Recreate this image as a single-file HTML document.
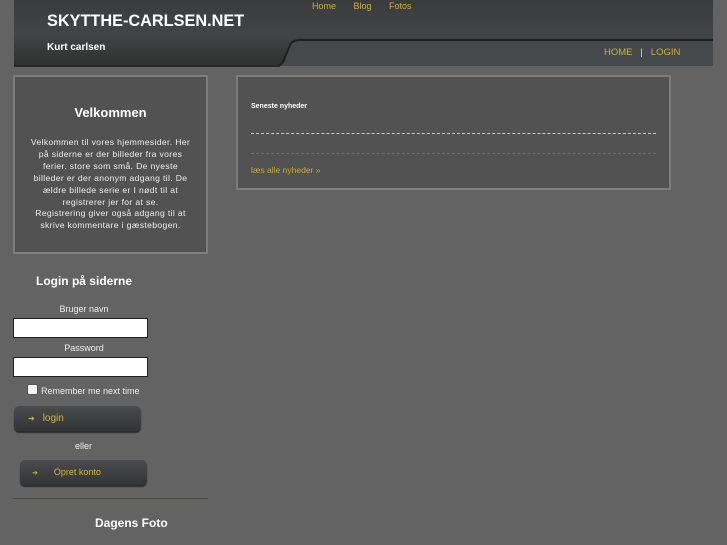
<!DOCTYPE html>
<html><head><meta charset="utf-8"><style>
body{margin:0;width:727px;height:545px;background:#636363;font-family:"Liberation Sans",sans-serif;position:relative;overflow:hidden}
.a{position:absolute}
.box{position:absolute;background:#525252;border:2px solid #7d7d7d;box-sizing:border-box}
.t{color:#fff;font-weight:bold}
.btn{position:absolute;background:linear-gradient(#4a4b4c,#333435);border-radius:5px;box-shadow:0 2px 1px #2c2c2c;color:#d8b43c}
input{position:absolute;margin:0;box-sizing:border-box;border:1px solid #222;background:#fff}
</style></head><body>
<svg class="a" style="left:0;top:0" width="727" height="70">
<defs><linearGradient id="g" x1="0" y1="0" x2="0" y2="1"><stop offset="0" stop-color="#3a3b3c"/><stop offset=".5" stop-color="#434445"/><stop offset="1" stop-color="#2f3030"/></linearGradient></defs>
<path d="M14 0H713V66H14Z" fill="url(#g)"/>
<path d="M300 40H713V66H280C283 63 285 58 288 50 290 44 292 40 300 40Z" fill="#46494b"/>
<path d="M713 40H300C292 40 290 44 288 50L284 60C282 64 280 66 275 66" stroke="#1e1f20" stroke-width="2" fill="none"/>
<rect x="14" y="65" width="266" height="2" fill="#282828"/>
</svg>
<div class="a" style="left:312px;top:1px;font-size:9px;color:#d1ad3a">Home&nbsp;&nbsp;&nbsp;&nbsp;&nbsp;&nbsp;&nbsp;Blog&nbsp;&nbsp;&nbsp;&nbsp;&nbsp;&nbsp;&nbsp;Fotos</div>
<div class="a t" style="left:47px;top:12px;font-size:16.3px">SKYTTHE-CARLSEN.NET</div>
<div class="a t" style="left:47px;top:42px;font-size:10px">Kurt carlsen</div>
<div class="a" style="left:604px;top:47px;font-size:9.5px;color:#d1ad3a">HOME&nbsp;&nbsp;&nbsp;<span style="color:#ddd">|</span>&nbsp;&nbsp;&nbsp;LOGIN</div>

<div class="box" style="left:13px;top:75px;width:195px;height:179px;text-align:center;color:#eee">
<div class="t" style="margin-top:28px;font-size:13px">Velkommen</div>
<div style="margin:17px 0 0;font-size:8.6px;letter-spacing:0.35px;line-height:11.9px;white-space:nowrap">Velkommen til vores hjemmesider. Her<br>på siderne er der billeder fra vores<br>ferier. store som små. De nyeste<br>billeder er der anonym adgang til. De<br>ældre billede serie er I nødt til at<br>registrerer jer for at se.<br>Registrering giver også adgang til at<br>skrive kommentare i gæstebogen.</div>
</div>

<div class="a t" style="left:0;width:168px;top:274px;text-align:center;font-size:12px">Login på siderne</div>
<div class="a" style="left:0;width:168px;top:304px;text-align:center;font-size:9px;color:#eee">Bruger navn</div>
<input style="left:13px;top:318px;width:135px;height:20px">
<div class="a" style="left:0;width:168px;top:343px;text-align:center;font-size:9px;color:#eee">Password</div>
<input style="left:13px;top:357px;width:135px;height:20px">
<div class="a" style="left:27px;top:384px;width:11px;height:11px;background:#f4f4f4;border:1px solid #555;box-sizing:border-box;border-radius:2px"></div>
<div class="a" style="left:41px;top:386px;font-size:9px;color:#eee">Remember me next time</div>
<div class="btn" style="left:14px;top:406px;width:127px;height:25px;font-size:10px;line-height:25px"><span style="margin-left:14px;font-size:8px">➔</span><span style="margin-left:8px">login</span></div>
<div class="a" style="left:75px;top:441px;font-size:9px;color:#eee">eller</div>
<div class="btn" style="left:20px;top:460px;width:127px;height:25px;font-size:9px;line-height:24px"><span style="margin-left:12px;font-size:7px">➔</span><span style="margin-left:16px">Opret konto</span></div>
<div class="a" style="left:13px;top:498px;width:195px;height:1px;background:#4c4a44"></div>
<div class="a t" style="left:95px;top:516px;font-size:12px">Dagens Foto</div>

<div class="box" style="left:236px;top:75px;width:435px;height:115px">
<div class="a t" style="left:13px;top:26px;font-size:7px">Seneste nyheder</div>
<div class="a" style="left:13px;top:56px;width:405px;border-top:1px dashed #c8c8c8"></div>
<div class="a" style="left:13px;top:76px;width:405px;border-top:1px dashed #6e6e6e"></div>
<div class="a" style="left:13px;top:88px;font-size:8.5px;color:#c9a83c">læs alle nyheder »</div>
</div>
</body></html>
